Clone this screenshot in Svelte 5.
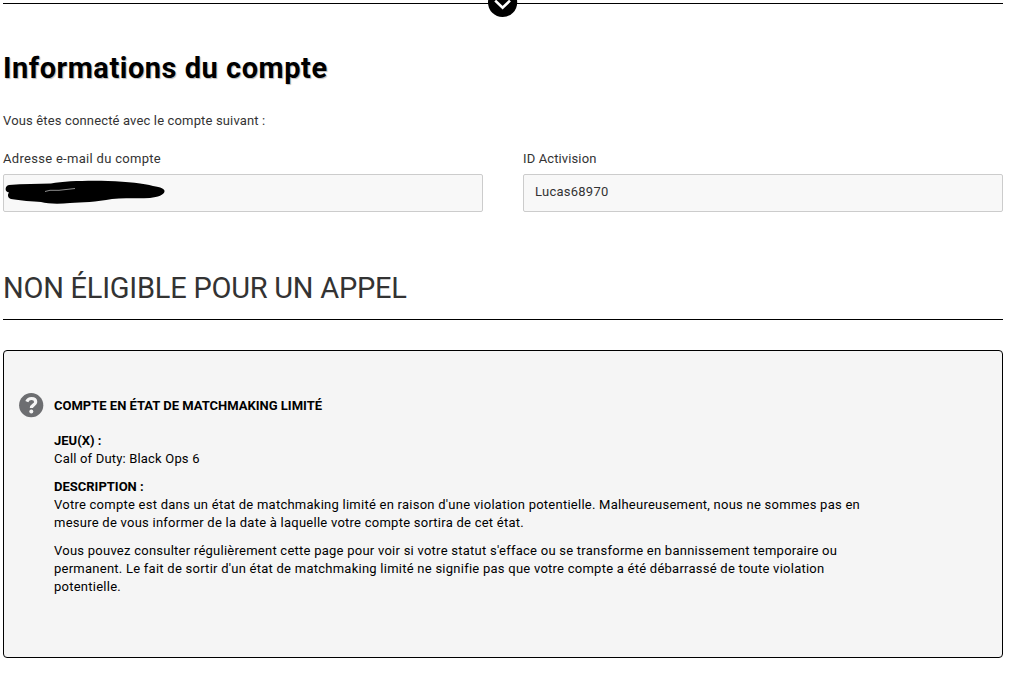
<script lang="ts">
	const activisionId = 'Lucas68970';

	const paragraphs = [
		[
			"Votre compte est dans un état de matchmaking limité en raison d'une violation potentielle. Malheureusement, nous ne sommes pas en",
			'mesure de vous informer de la date à laquelle votre compte sortira de cet état.'
		],
		[
			"Vous pouvez consulter régulièrement cette page pour voir si votre statut s'efface ou se transforme en bannissement temporaire ou",
			"permanent. Le fait de sortir d'un état de matchmaking limité ne signifie pas que votre compte a été débarrassé de toute violation",
			'potentielle.'
		]
	];
</script>

<main>
	<div class="divider">
		<svg class="chevron" width="30" height="30" viewBox="0 0 30 30">
			<circle cx="14.6" cy="15.4" r="14.6" fill="#000" />
			<path d="M7.2 13.6 L14.6 20.8 L22 13.6" fill="none" stroke="#fff" stroke-width="2.6" />
		</svg>
	</div>

	<section class="account">
		<h1>Informations du compte</h1>
		<p class="intro">Vous êtes connecté avec le compte suivant :</p>
		<div class="fields">
			<div class="field">
				<span class="label">Adresse e-mail du compte</span>
				<div class="value redacted">
					<svg width="162" height="30" viewBox="0 0 162 30">
						<path
							d="M4 4 C18 2.5 33 3 46 2.5 C60 0 83 -0.5 103 0 C123 0.5 139 2.5 148 5 C156 6 160 8 159.5 10.5 C159 14 153 16 145 17 C131 18 119 16.5 107 18 C91 21 77 21.5 65 22 C55 23 43 23 36 21 C28 20.5 15 19.5 6 18 C3 17 2 14 4 11.5 C-0.5 11 -0.5 5 4 4 Z"
							fill="#000"
						/>
						<path d="M40 10.5 L45 9.3 L54 9.3 L70 7.5" fill="none" stroke="#ccc" stroke-width="0.7" />
					</svg>
				</div>
			</div>
			<div class="field">
				<span class="label id-label">ID Activision</span>
				<div class="value">{activisionId}</div>
			</div>
		</div>
	</section>

	<h2>NON ÉLIGIBLE POUR UN APPEL</h2>

	<section class="case">
		<svg class="help" width="25" height="25" viewBox="0 0 25 25">
			<circle cx="12.2" cy="12.2" r="12.1" fill="#6d6e71" />
			<path
				d="M7.8 8.7 C8.8 6.4 10.5 5.5 12.5 5.5 C15 5.5 16.7 6.9 16.7 9 C16.7 11.9 12.4 11.8 12.4 15"
				fill="none"
				stroke="#f5f5f5"
				stroke-width="3.2"
			/>
			<circle cx="12.3" cy="18.5" r="2" fill="#f5f5f5" />
		</svg>
		<div class="details">
			<h3>COMPTE EN ÉTAT DE MATCHMAKING LIMITÉ</h3>
			<h4 class="games">JEU(X) :</h4>
			<p class="game">Call of Duty: Black Ops 6</p>
			<h4 class="description">DESCRIPTION :</h4>
			{#each paragraphs as lines}
				<p>
					{#each lines as line}
						<span class="line">{line}</span>
					{/each}
				</p>
			{/each}
		</div>
	</section>
</main>

<style>
	:global(body) {
		background: #fff;
	}

	main {
		box-sizing: border-box;
		width: 1003px;
		padding: 3px 0 0 3px;
		font-family: Roboto, 'Liberation Sans', sans-serif;
		font-size: 13px;
		line-height: 18px;
		color: #333;
	}

	h1,
	h2,
	h3,
	h4,
	p {
		margin: 0;
	}

	.divider {
		position: relative;
		height: 1px;
		background: #000;
	}

	.chevron {
		position: absolute;
		left: 485px;
		top: -16px;
	}

	h1 {
		margin-top: 46px;
		font-size: 29px;
		line-height: 36px;
		color: #000;
		letter-spacing: 0.52px;
		text-shadow: 1px 1px 1px #bbb;
	}

	.intro {
		margin-top: 26px;
		letter-spacing: 0.15px;
	}

	.fields {
		display: flex;
		gap: 40px;
		margin-top: 20px;
	}

	.field {
		flex: 1;
	}

	.label {
		display: block;
		letter-spacing: 0.3px;
	}

	.id-label {
		letter-spacing: 0.12px;
	}

	.value {
		box-sizing: border-box;
		height: 38px;
		margin-top: 6px;
		padding: 8px 11px;
		border: 1px solid #ccc;
		border-radius: 2px;
		background: #f8f8f8;
		letter-spacing: 0.25px;
	}

	.redacted {
		padding: 6px 1px;
	}

	.redacted svg {
		display: block;
		overflow: visible;
	}

	h2 {
		margin-top: 58px;
		padding-bottom: 13px;
		border-bottom: 1px solid #000;
		font-size: 29px;
		font-weight: 400;
		line-height: 36px;
		letter-spacing: -0.24px;
	}

	.case {
		box-sizing: border-box;
		display: flex;
		height: 308px;
		margin-top: 30px;
		padding: 42px 15px 0;
		border: 1px solid #000;
		border-radius: 4px;
		background: #f5f5f5;
		color: #000;
	}

	.help {
		flex: none;
		margin-right: 10px;
	}

	.details {
		padding-top: 4px;
		white-space: nowrap;
	}

	h3,
	h4 {
		font-size: 13px;
		line-height: 18px;
	}

	.games {
		margin-top: 17px;
	}

	.description {
		margin-top: 10px;
	}

	.details p {
		letter-spacing: 0.25px;
	}

	.details .game {
		letter-spacing: 0.18px;
	}

	.details p + p {
		margin-top: 10px;
	}

	.line {
		display: block;
	}
</style>
